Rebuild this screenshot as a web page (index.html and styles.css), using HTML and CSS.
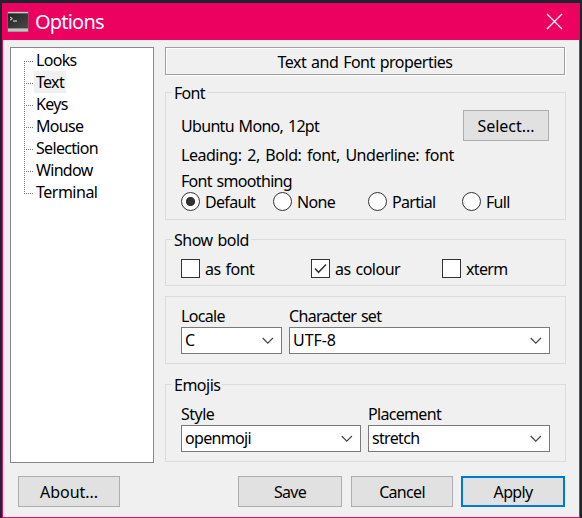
FILE: index.html
```
<!DOCTYPE html>
<html lang="en">
<head>
<meta charset="utf-8">
<title>Options</title>
<link rel="stylesheet" href="styles.css">
</head>
<body>
<div class="window">
  <header class="titlebar">
    <svg class="app-icon" width="22" height="22" viewBox="0 0 22 22">
      <defs><linearGradient id="screen" x1="0" y1="0" x2="1" y2="1"><stop offset="0" stop-color="#202422"/><stop offset="1" stop-color="#484c49"/></linearGradient></defs>
      <rect x=".5" y=".5" width="21" height="20.5" fill="#777"/>
      <rect x="1" y="1" width="20" height="1.5" fill="#c9c9c9"/>
      <rect x="1" y="2.5" width="20" height="15" fill="url(#screen)"/>
      <rect x="1" y="17.5" width="20" height="3" fill="#c4c4c4"/>
      <path d="M3 6l2.4 1.6L3 9.2M6 10h4" fill="none" stroke="#eee" stroke-width="1"/>
    </svg>
    <h1><span>Options</span></h1>
    <svg class="close" width="17" height="17" viewBox="0 0 17 17"><path d="M1 1l15 15M16 1L1 16" stroke="#fff" stroke-width="1.2"/></svg>
  </header>
  <div class="main">
    <ul class="tree">
      <li><span>Looks</span></li>
      <li class="selected"><span>Text</span></li>
      <li><span>Keys</span></li>
      <li><span>Mouse</span></li>
      <li><span>Selection</span></li>
      <li><span>Window</span></li>
      <li><span class="loose">Terminal</span></li>
    </ul>
    <section class="panel">
      <h2 class="heading"><span>Text and Font properties</span></h2>
      <fieldset class="group font">
        <legend><span>Font</span></legend>
        <div class="font-row"><span>Ubuntu Mono, 12pt</span><button><span class="wide">Select...</span></button></div>
        <p><span class="details">Leading: 2, Bold: font, Underline: font</span></p>
        <p class="smoothing"><span>Font smoothing</span></p>
        <div class="radios">
          <label><i class="radio on"></i><span>Default</span></label>
          <label><i class="radio"></i><span>None</span></label>
          <label><i class="radio"></i><span>Partial</span></label>
          <label><i class="radio"></i><span>Full</span></label>
        </div>
      </fieldset>
      <fieldset class="group bold">
        <legend><span class="loose">Show bold</span></legend>
        <div class="checks">
          <label><i class="check"></i><span class="loose">as font</span></label>
          <label><i class="check"><svg width="17" height="17" viewBox="0 0 17 17"><path d="M3 8.5l3.5 3.8L14 4.5" fill="none" stroke="#333" stroke-width="1.5"/></svg></i><span class="loose">as colour</span></label>
          <label><i class="check"></i><span>xterm</span></label>
        </div>
      </fieldset>
      <div class="group locale">
        <div class="field w101"><span>Locale</span><div class="combo"><span>C</span><svg width="12" height="8" viewBox="0 0 12 8"><path d="M.7 1l5.1 5.1L10.9 1"/></svg></div></div>
        <div class="field w261"><span>Character set</span><div class="combo"><span class="wide">UTF-8</span><svg width="12" height="8" viewBox="0 0 12 8"><path d="M.7 1l5.1 5.1L10.9 1"/></svg></div></div>
      </div>
      <fieldset class="group emojis">
        <legend><span class="loose">Emojis</span></legend>
        <div class="fields">
          <div class="field w180"><span class="loose">Style</span><div class="combo"><span>openmoji</span><svg width="12" height="8" viewBox="0 0 12 8"><path d="M.7 1l5.1 5.1L10.9 1"/></svg></div></div>
          <div class="field w182"><span>Placement</span><div class="combo"><span>stretch</span><svg width="12" height="8" viewBox="0 0 12 8"><path d="M.7 1l5.1 5.1L10.9 1"/></svg></div></div>
        </div>
      </fieldset>
    </section>
  </div>
  <footer class="actions">
    <button class="about"><span class="wide">About...</span></button>
    <button class="save"><span>Save</span></button>
    <button class="cancel"><span>Cancel</span></button>
    <button class="apply"><span>Apply</span></button>
  </footer>
</div>
</body>
</html>
```
FILE: styles.css
```
* { box-sizing: border-box; margin: 0; padding: 0; }
body { width: 582px; height: 518px; padding: 3px 2px 0; background: #20242f; overflow: hidden; font: 16px/22px "Noto Sans", sans-serif; letter-spacing: -.68px; word-spacing: 1.2px; color: #000; }
span { white-space: nowrap; }
.loose { letter-spacing: -.5px; }
.wide { letter-spacing: -.05px; }
.details { letter-spacing: -.48px; word-spacing: 2px; }
.window { width: 578px; height: 515px; border: 1px solid #e5106a; border-top: 0; background: #f0f0f0; }
.titlebar { display: flex; align-items: center; height: 37px; margin: 0 -1px; padding: 0 17px 0 5px; background: #ec0060; color: #fff; }
.titlebar h1 { flex: 1; margin-left: 6px; font-size: 20px; font-weight: 400; letter-spacing: -.8px; }
.main { display: flex; gap: 11px; padding: 7px 13px 0 7px; }
.tree { width: 144px; height: 416px; padding: 1px 0 0 13px; border: 1px solid #828790; background: #fff; list-style: none; }
.tree li { display: flex; align-items: center; height: 22px; }
.tree li::before { content: ""; width: 10px; height: 22px; background: repeating-linear-gradient(90deg, #777 0 1px, transparent 1px 2px) 0 12px / 10px 1px no-repeat, repeating-linear-gradient(#777 0 1px, transparent 1px 2px) 0 0 / 1px 22px no-repeat; }
.tree li:first-child::before { background-position: 0 12px, 0 12px; }
.tree li:last-child::before { background-size: 10px 1px, 1px 12px; }
.tree li > span { padding: 0 2px; }
.tree .selected > span { background: #f0f0f0; }
.panel { width: 401px; }
.heading { width: 400px; height: 28px; border: 1px solid #a0a0a0; box-shadow: inset 1px 1px #fff, 1px 1px #fff; font-size: 16px; font-weight: 400; line-height: 28px; letter-spacing: -.5px; text-align: center; }
.group { position: relative; border: 1px solid #dcdcdc; padding: 0 15px; }
.group legend { position: absolute; top: -11px; left: 6px; height: 22px; padding: 0 2px; background: #f0f0f0; }
.font { height: 128px; margin-top: 17px; padding-top: 17px; }
.font-row { display: flex; align-items: center; justify-content: space-between; height: 31px; padding-right: 1px; }
button { display: flex; align-items: center; justify-content: center; height: 31px; border: 1px solid #adadad; background: #e1e1e1; font: inherit; letter-spacing: inherit; color: inherit; }
.font-row button { width: 86px; }
.font p { height: 26px; margin-top: 3px; line-height: 22px; }
.font .smoothing { height: 22px; margin-top: 0; }
.radios, .checks { display: grid; }
.radios { grid-template-columns: 92px 95px 94px auto; }
label { display: flex; align-items: center; gap: 5px; height: 19px; }
.radio { flex: none; width: 19px; height: 19px; border: 1px solid #333; border-radius: 50%; background: #fff; }
.radio.on { background: radial-gradient(circle, #333 0 4.2px, #fff 5px); }
.bold { height: 47px; margin-top: 19px; padding-top: 19px; }
.checks { grid-template-columns: 130px 131px auto; }
.check { flex: none; width: 19px; height: 19px; border: 1px solid #333; background: #fff; }
.check svg { display: block; }
.locale { display: flex; gap: 7px; height: 68px; margin-top: 10px; padding-top: 8px; }
.fields { display: flex; gap: 7px; }
.field > span { display: block; height: 22px; }
.combo { display: flex; align-items: center; justify-content: space-between; height: 27px; padding: 0 7px 0 3px; border: 1px solid #7a7a7a; background: #fff; }
.combo > span { line-height: 20px; margin-top: -1px; }
.combo svg { fill: none; stroke: #444; stroke-width: 1.2; }
.w101 { width: 101px; }
.w261 { width: 261px; }
.w180 { width: 180px; }
.w182 { width: 182px; }
.emojis { height: 78px; margin-top: 20px; padding-top: 18px; }
.actions { display: flex; padding: 13px 14px 0 15px; }
.about { width: 102px; margin-right: auto; }
.save { width: 104px; margin-right: 9px; }
.cancel { width: 102px; margin-right: 8px; }
.apply { width: 104px; border: 2px solid #0078d7; }
```
